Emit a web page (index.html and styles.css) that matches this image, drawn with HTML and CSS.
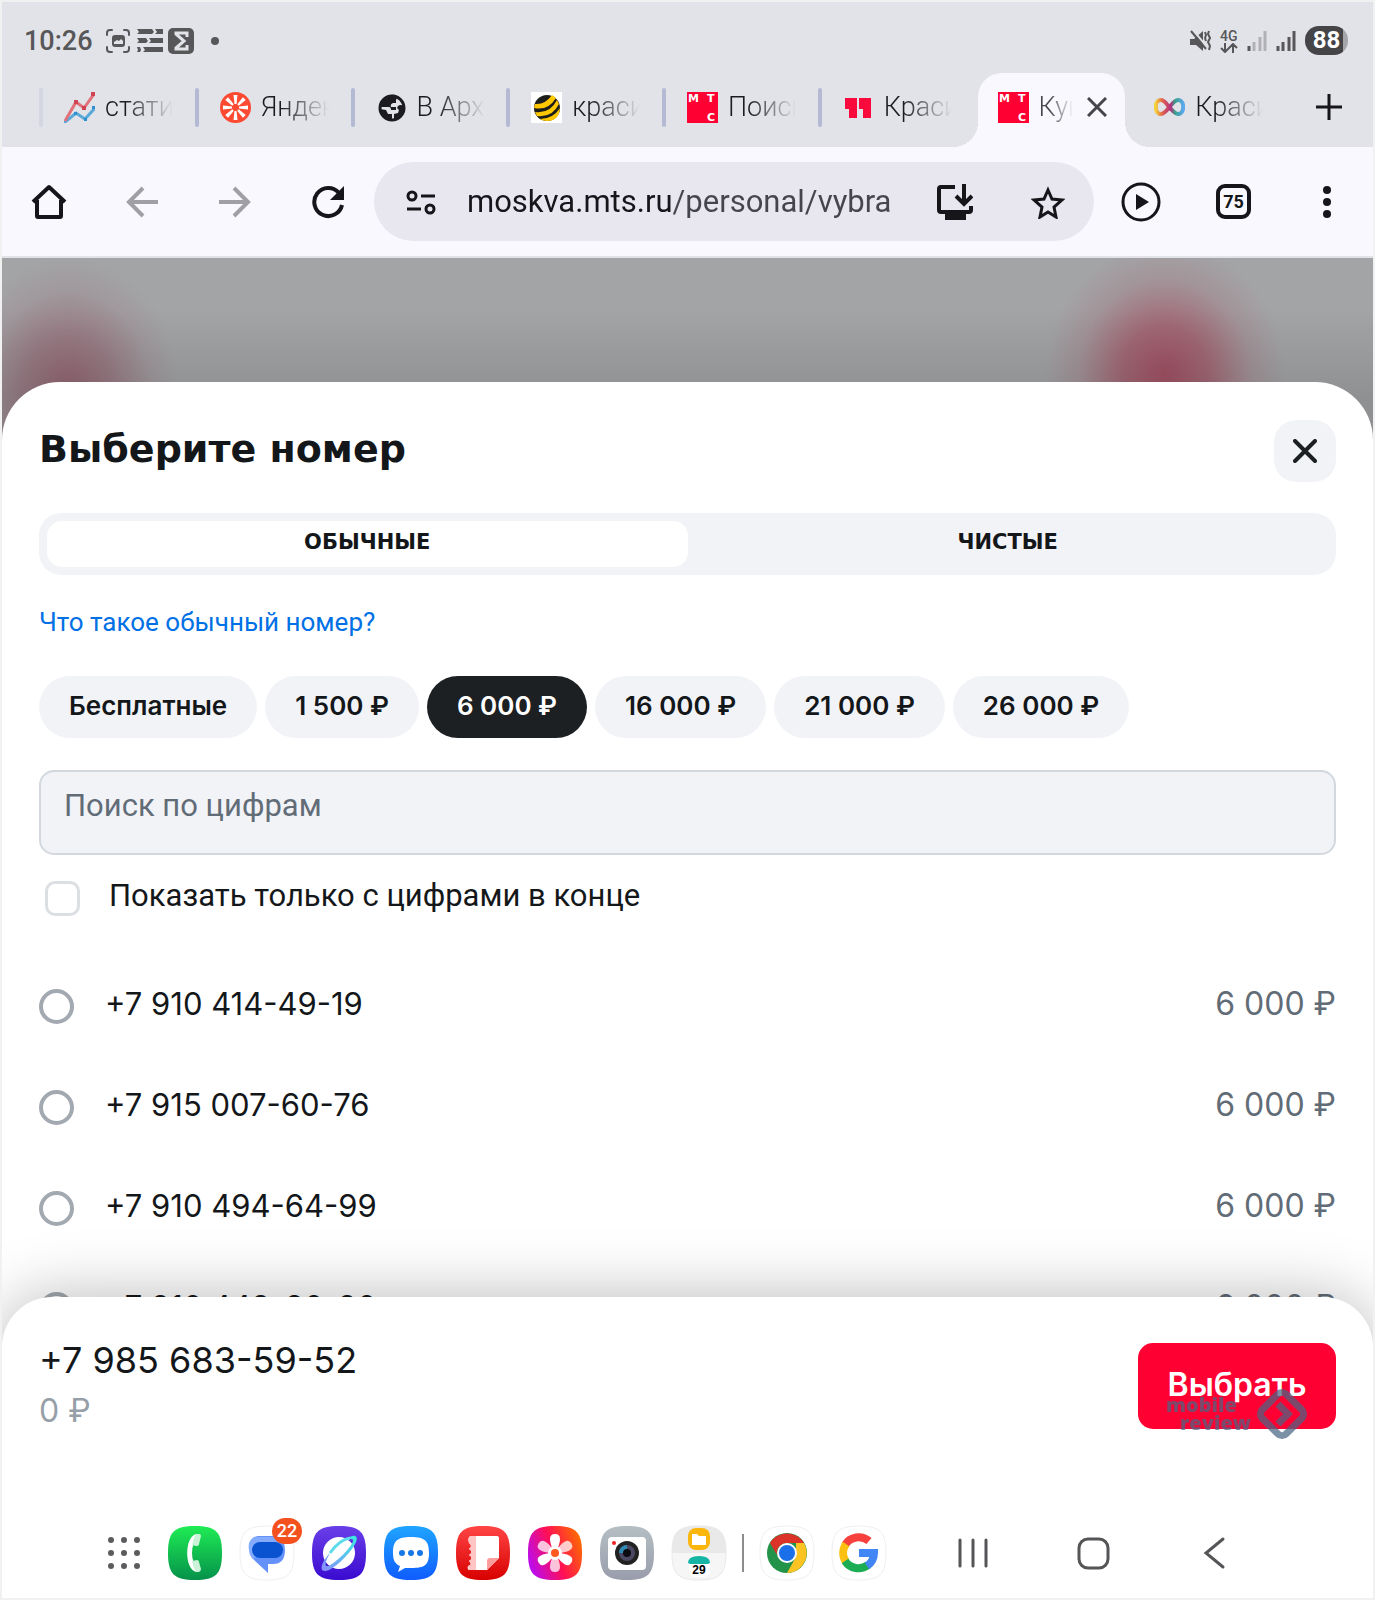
FILE: index.html
```html
<!DOCTYPE html>
<html lang="ru">
<head>
  <meta charset="utf-8">
  <meta name="viewport" content="width=device-width, initial-scale=1">
  <title>Выберите номер</title>
  <link rel="stylesheet" href="styles.css">
</head>
<body>
  <!-- shared shapes -->
  <svg class="defs" width="0" height="0" aria-hidden="true">
    <defs>
      <path id="squircle" d="M27 0C6 0 0 6 0 27S6 54 27 54 54 48 54 27 48 0 27 0Z"/>
      <linearGradient id="g-green" x2="0" y2="1"><stop stop-color="#1fec54"/><stop offset="1" stop-color="#05914a"/></linearGradient>
      <linearGradient id="g-violet" x2="0" y2="1"><stop stop-color="#6a3fe8"/><stop offset="1" stop-color="#3a0bd0"/></linearGradient>
      <linearGradient id="g-blue" x2="0" y2="1"><stop stop-color="#1fa5ff"/><stop offset="1" stop-color="#0f5cff"/></linearGradient>
      <linearGradient id="g-red" x2="0" y2="1"><stop stop-color="#ff4545"/><stop offset="1" stop-color="#d80000"/></linearGradient>
      <linearGradient id="g-grey" x2="0" y2="1"><stop stop-color="#b5bfc4"/><stop offset="1" stop-color="#9a9dac"/></linearGradient>
      <linearGradient id="g-flower" y1="0.7" x2="1" y2="0.3"><stop stop-color="#b80cf5"/><stop offset="0.5" stop-color="#ff0f55"/><stop offset="1" stop-color="#ff6a00"/></linearGradient>
      <linearGradient id="g-orbit" x1="1" y1="0" x2="0" y2="1"><stop stop-color="#35eede"/><stop offset="1" stop-color="#8c8cff"/></linearGradient>
      <linearGradient id="g-loop"><stop stop-color="#f5d13c"/><stop offset="0.25" stop-color="#e0614e"/><stop offset="0.55" stop-color="#b5307f"/><stop offset="0.7" stop-color="#37a088"/><stop offset="1" stop-color="#5ba8ee"/></linearGradient>
      <symbol id="mts" viewBox="0 0 31 31">
        <rect width="31" height="31" fill="#ff0032"/>
        <g class="mts-letters"><text x="1" y="10">М</text><text x="20" y="10">Т</text><text x="20" y="29">С</text></g>
      </symbol>
    </defs>
  </svg>

  <div class="status-bar">
    <div class="status-left">
      <span class="time">10:26</span>
      <svg width="90" height="28" viewBox="0 0 90 28">
        <g fill="none" stroke="#57575a" stroke-width="2" stroke-linecap="round">
          <path d="M2 8V6q0-3 3-3h2M19 3h2q3 0 3 3v2M24 20v2q0 3-3 3h-2M7 25H5q-3 0-3-3v-2"/>
        </g>
        <rect x="7" y="8" width="13" height="12" rx="3" fill="#57575a"/>
        <path d="M9 17v-2l3-2 2 1 2-2 2 2v3z" fill="#e2e3e8"/>
        <g fill="#57575a">
          <path d="M32 2h15l2 3-2 2H32l2-2zM50 2h8v5h-8l2-2zM32 11h9l2 3-2 2h-9l2-2zM44 11h14v5H44l2-2zM32 20h3l1 3-1 2h-3l1-2zM38 20h20v5H38l2-2z"/>
          <rect x="63" y="1" width="26" height="26" rx="5"/>
        </g>
        <path d="M82 10V6H71v1l8 7-8 7v1h11v-4" fill="none" stroke="#e2e3e8" stroke-width="3"/>
      </svg>
      <span class="status-dot"></span>
    </div>
    <div class="status-right">
      <svg width="22" height="22" viewBox="0 0 22 22">
        <path d="M1 9h4l9-8v20l-7-6H1z" fill="#57575a"/>
        <path d="M4 0l14 17" stroke="#e2e3e8" stroke-width="2"/>
        <path d="M2 1l15 18" stroke="#57575a" stroke-width="2"/>
        <path d="M16 2l1 3-1 3 1 3M20 1l-1 3 2 4-2 4 2 4-1 4" fill="none" stroke="#57575a" stroke-width="2"/>
      </svg>
      <span class="network">4G
        <svg width="18" height="10" viewBox="0 0 18 10"><path d="M5 0v9M1 5l4 4 4-4M13 10V1M9 5l4-4 4 4" fill="none" stroke="#57575a" stroke-width="2"/></svg>
      </span>
      <svg width="20" height="20" viewBox="0 0 20 20" stroke-width="3"><path d="M2 15v5" stroke="#57575a"/><path d="M7 11v9M13 6v14M18 0v20" stroke="#b0b0b5"/></svg>
      <svg width="20" height="20" viewBox="0 0 20 20" stroke-width="3" stroke="#57575a"><path d="M2 15v5M7 11v9M13 6v14M18 0v20"/></svg>
      <span class="battery">88</span>
    </div>
  </div>

  <nav class="tabs">
    <a class="tab first" href="#">
      <svg class="tab-icon" viewBox="0 0 31 31" fill="none" stroke-width="3">
        <path d="M0 31l12-10 9 6 10-11" stroke="#58a9d8"/><path d="M1 29l11-19 8 6L30 2" stroke="#e0707a"/>
        <path d="M10 8h4v4h-4zM18 14h4v4h-4zM27 0h4v4h-4z" fill="#cf4452"/><path d="M10 20h3v3h-3zM20 26h3v3h-3zM28 14h3v3h-3z" fill="#2f8fd0"/>
      </svg>
      <span class="tab-title">статис</span>
    </a>
    <a class="tab" href="#">
      <svg class="tab-icon" viewBox="0 0 31 31"><circle cx="15.5" cy="15.5" r="15.5" fill="#fc4a32"/>
        <g fill="#fff"><path id="ray" d="M13.500 3h4l-1 9h-2z"/><use href="#ray" transform="rotate(45 15.500 15.500)"/><use href="#ray" transform="rotate(90 15.500 15.500)"/><use href="#ray" transform="rotate(135 15.500 15.500)"/><use href="#ray" transform="rotate(180 15.500 15.500)"/><use href="#ray" transform="rotate(225 15.500 15.500)"/><use href="#ray" transform="rotate(270 15.500 15.500)"/><use href="#ray" transform="rotate(315 15.500 15.500)"/></g>
      </svg>
      <span class="tab-title">Яндекс</span>
    </a>
    <a class="tab" href="#">
      <svg class="tab-icon" viewBox="0 0 31 31"><circle cx="16" cy="16" r="12" fill="#e2e3e8" stroke="#1b1b20" stroke-width="3"/><path d="M19 3C10 2 4 7 4 15h9q2 0 2 3h5v-3h-5q-1-3 2-4h3V8q0-2 3-3zM28 14q-4-2-6 0t1 4l-1 3-4 1v6q10-2 10-14zM4 17q1 11 12 11v-6h-4l-2-4z" fill="#1b1b20"/></svg>
      <span class="tab-title">В Архи</span>
    </a>
    <a class="tab" href="#">
      <svg class="tab-icon" viewBox="0 0 31 31"><rect width="31" height="31" fill="#fff"/><circle cx="16" cy="16" r="13" fill="#1d1d1b"/>
        <path d="M4 12q10 1 17-9l4 3q-8 13-22 10zM4 20q15 2 22-12l2 4q-7 14-22 12zM9 27q13 0 20-11-1 13-13 13-4 0-7-2z" fill="#ffc800"/></svg>
      <span class="tab-title">красив</span>
    </a>
    <a class="tab" href="#">
      <svg class="tab-icon"><use href="#mts"/></svg>
      <span class="tab-title">Поиск</span>
    </a>
    <a class="tab" href="#">
      <svg class="tab-icon" viewBox="0 0 31 31"><path d="M2 6h12v20H6V17H2zM16 6h12v20h-8V17h-4z" fill="#fa0a3c"/></svg>
      <span class="tab-title">Красив</span>
    </a>
    <a class="tab active" href="#">
      <svg class="tab-icon"><use href="#mts"/></svg>
      <span class="tab-title">Купить</span>
      <svg class="tab-close" width="20" height="20" viewBox="0 0 20 20"><path d="M1 1l18 18M19 1L1 19" stroke="#45454b" stroke-width="3"/></svg>
    </a>
    <a class="tab last" href="#">
      <svg class="tab-icon" viewBox="0 0 31 31"><path d="M15 15C11 9 9 8 7 8c-7 0-7 14 0 14 6 0 11-14 17-14 7 0 7 14 0 14-3 0-5-3-9-7z" fill="none" stroke="url(#g-loop)" stroke-width="4"/></svg>
      <span class="tab-title">Красив</span>
    </a>
    <button class="new-tab" aria-label="Новая вкладка">
      <svg width="26" height="26" viewBox="0 0 26 26"><path d="M13 0v26M0 13h26" stroke="#15151a" stroke-width="3"/></svg>
    </button>
  </nav>

  <div class="toolbar">
    <button class="tool" aria-label="Домой"><svg width="36" height="36" viewBox="0 0 36 36" fill="none" stroke="#15151a" stroke-width="4" stroke-linejoin="round"><path d="M2 18L18 3l16 15M6 16v16q0 1 1 1h22q1 0 1-1V16"/></svg></button>
    <button class="tool" aria-label="Назад"><svg width="32" height="32" viewBox="0 0 32 32" fill="none" stroke="#a09fa5" stroke-width="4"><path d="M32 16H3M17 2L3 16l14 14"/></svg></button>
    <button class="tool" aria-label="Вперёд"><svg width="32" height="32" viewBox="0 0 32 32" fill="none" stroke="#a09fa5" stroke-width="4"><path d="M0 16h29M15 2l14 14-14 14"/></svg></button>
    <button class="tool" aria-label="Обновить"><svg width="34" height="34" viewBox="0 0 34 34"><path d="M28 8A14 14 0 1 0 31 20" fill="none" stroke="#15151a" stroke-width="4"/><path d="M33 1v14H19z" fill="#15151a"/></svg></button>
    <div class="address">
      <button class="tool" aria-label="Сведения о сайте"><svg width="30" height="26" viewBox="0 0 30 26" fill="none" stroke="#15151a" stroke-width="3"><circle cx="6" cy="7" r="4"/><circle cx="24" cy="20" r="4"/><path d="M15 7h14M1 20h14"/></svg></button>
      <input class="url" type="text" aria-label="Адрес" value="moskva.mts.ru/personal/vybra">
      <button class="tool" aria-label="Установить"><svg width="36" height="36" viewBox="0 0 36 36" fill="none" stroke="#15151a" stroke-width="4"><path d="M18 3H4q-2 0-2 2v21q0 2 2 2h28q2 0 2-2v-4M27 0v19M19 12l8 8 8-8"/><path d="M8 28h21v8H8z" fill="#15151a" stroke="none"/></svg></button>
      <button class="tool" aria-label="В закладки"><svg width="34" height="34" viewBox="0 0 34 34" fill="none" stroke="#15151a" stroke-width="3"><path d="M17 5l4 9 10 1-8 7 2 10-8-5-8 5 2-10-8-7 10-1z"/></svg></button>
    </div>
    <button class="tool" aria-label="Воспроизвести"><svg width="40" height="40" viewBox="0 0 40 40"><circle cx="20" cy="20" r="18" fill="none" stroke="#15151a" stroke-width="3"/><path d="M15 12l13 8-13 8z" fill="#15151a"/></svg></button>
    <button class="tool" aria-label="Вкладки"><span class="tab-count">75</span></button>
    <button class="tool" aria-label="Меню"><svg width="8" height="32" viewBox="0 0 8 32" fill="#15151a"><circle cx="4" cy="4" r="4"/><circle cx="4" cy="16" r="4"/><circle cx="4" cy="28" r="4"/></svg></button>
  </div>

  <div class="page">
    <main class="sheet">
      <div class="sheet-header">
        <h1>Выберите номер</h1>
        <button class="close" aria-label="Закрыть"><svg width="24" height="24" viewBox="0 0 24 24"><path d="M2 2l20 20M22 2L2 22" stroke="#1d2023" stroke-width="4" stroke-linecap="round"/></svg></button>
      </div>

      <div class="segmented">
        <button class="segment selected">ОБЫЧНЫЕ</button>
        <button class="segment">ЧИСТЫЕ</button>
      </div>

      <a class="hint" href="#">Что такое обычный номер?</a>

      <div class="chips">
        <button class="chip">Бесплатные</button>
        <button class="chip">1 500 ₽</button>
        <button class="chip selected">6 000 ₽</button>
        <button class="chip">16 000 ₽</button>
        <button class="chip">21 000 ₽</button>
        <button class="chip">26 000 ₽</button>
      </div>

      <input class="search" type="text" placeholder="Поиск по цифрам" aria-label="Поиск по цифрам">

      <div class="only-end">
        <input type="checkbox" id="only-end">
        <label for="only-end">Показать только с цифрами в конце</label>
      </div>

      <div class="numbers">
        <div class="number">
          <input type="radio" name="number" id="n1">
          <label for="n1"><span>+7 910 414-49-19</span><span class="price">6 000 ₽</span></label>
        </div>
        <div class="number">
          <input type="radio" name="number" id="n2">
          <label for="n2"><span>+7 915 007-60-76</span><span class="price">6 000 ₽</span></label>
        </div>
        <div class="number">
          <input type="radio" name="number" id="n3">
          <label for="n3"><span>+7 910 494-64-99</span><span class="price">6 000 ₽</span></label>
        </div>
        <div class="number">
          <input type="radio" name="number" id="n4">
          <label for="n4"><span>+7 910 449-80-90</span><span class="price">6 000 ₽</span></label>
        </div>
      </div>
    </main>
  </div>

  <footer class="bottom">
    <div class="choice">
      <div>
        <div class="choice-number">+7 985 683-59-52</div>
        <div class="choice-price">0 ₽</div>
      </div>
      <div class="choice-action">
        <button class="submit">Выбрать</button>
        <div class="watermark">
          <div><div>mobile</div><div class="second">review</div></div>
          <svg width="54" height="54" viewBox="0 0 54 54" fill="none" stroke="#4b6684" stroke-width="7"><rect x="10" y="10" width="34" height="34" rx="6" transform="rotate(45 27 27)"/><path d="M23 17l10 10-10 10"/></svg>
        </div>
      </div>
    </div>

    <div class="dock">
      <div class="apps">
        <button class="app" aria-label="Все приложения"><svg viewBox="0 0 54 54" fill="#5c5c5f"><circle cx="15" cy="14" r="3"/><circle cx="28" cy="14" r="3"/><circle cx="41" cy="14" r="3"/><circle cx="15" cy="27" r="3"/><circle cx="28" cy="27" r="3"/><circle cx="41" cy="27" r="3"/><circle cx="15" cy="40" r="3"/><circle cx="28" cy="40" r="3"/><circle cx="41" cy="40" r="3"/></svg></button>
        <button class="app" aria-label="Телефон"><svg viewBox="0 0 54 54"><use href="#squircle" fill="url(#g-green)"/><path d="M29 8C16 9 16 45 29 46q2 0 2-3-7-5-7-16t7-16q0-3-2-3z" fill="#fff"/><path d="M28 8h3q2 0 2 2l-2 8q0 2-3 2l-4-1q1-6 4-11zM24 35l5-1q2 0 2 2l2 7q0 2-2 3h-3q-3-5-4-11z" fill="#c9f2d8"/></svg></button>
        <button class="app" aria-label="Сообщения"><svg viewBox="0 0 54 54"><use href="#squircle" fill="#fff" stroke="#efeff2"/><path d="M18 10h18q9 3 9 14 0 14-12 14h-5v9L12 32Q6 11 18 10z" fill="#6492fa"/><path d="M16 11q-9 2-7 13 0 5 4 9l20-14 9-3q-2-5-6-5z" fill="#85abff"/><rect x="12" y="16" width="31" height="16" rx="8" fill="#0952d0"/></svg><span class="badge">22</span></button>
        <button class="app" aria-label="Браузер"><svg viewBox="0 0 54 54"><use href="#squircle" fill="url(#g-violet)"/><circle cx="27" cy="27" r="16" fill="#fff"/><path d="M34 14C41 7 47 9 44 16 40 26 21 45 13 45c-7 0-2-11 5-18-5 9-6 14-2 13C23 38 42 19 41 14q-1-2-7 0z" fill="url(#g-orbit)"/><path d="M18 27Q27 14 38 12" fill="none" stroke="#5fdcec" stroke-width="3"/></svg></button>
        <button class="app" aria-label="Чаты"><svg viewBox="0 0 54 54"><use href="#squircle" fill="url(#g-blue)"/><path d="M27 11c14 0 18 4 18 16s-4 15-18 15h-6l-7 4 2-6c-5-2-7-6-7-13 0-12 4-16 18-16z" fill="#fff"/><g fill="#1777e8"><circle cx="18" cy="27" r="3"/><circle cx="27" cy="27" r="3"/><circle cx="36" cy="27" r="3"/></g></svg></button>
        <button class="app" aria-label="Заметки"><svg viewBox="0 0 54 54"><use href="#squircle" fill="url(#g-red)"/><path d="M15 10h26q2 0 2 2v20L31 44H13q-2-1-1-4 5-1 1-5 5-3 0-6 5-3 0-6 4-3 0-6-2-6 2-7z" fill="#fff"/><path d="M15 10h5v34h-7l-1-4q5-1 1-5 5-3 0-6 5-3 0-6 4-3 0-6-2-6 2-7z" fill="#ffc5c5"/><path d="M31 44V35q0-3 3-3h9z" fill="#ff9c9c"/></svg></button>
        <button class="app" aria-label="Галерея"><svg viewBox="0 0 54 54"><use href="#squircle" fill="url(#g-flower)"/><g fill="#fff"><path id="petal" d="M27 27Q22 19 22 13q0-5 5-5t5 5q0 6-5 14z"/><use href="#petal" transform="rotate(60 27 27)" opacity="0.75"/><use href="#petal" transform="rotate(120 27 27)"/><use href="#petal" transform="rotate(180 27 27)" opacity="0.75"/><use href="#petal" transform="rotate(240 27 27)"/><use href="#petal" transform="rotate(300 27 27)" opacity="0.75"/></g><circle cx="27" cy="27" r="7" fill="#fff"/><circle cx="27" cy="27" r="4" fill="#ff5a1f"/></svg></button>
        <button class="app" aria-label="Камера"><svg viewBox="0 0 54 54"><use href="#squircle" fill="url(#g-grey)"/><rect x="8" y="11" width="38" height="33" rx="4" fill="#fff"/><circle cx="14" cy="17" r="2" fill="#e22"/><circle cx="27" cy="27" r="12" fill="#222"/><circle cx="27" cy="27" r="8" fill="#4c4862"/><path d="M27 27v-8a8 8 0 0 0-8 8z" fill="#2d8bb5"/><circle cx="27" cy="27" r="4" fill="#0b0b12"/></svg></button>
        <button class="app" aria-label="Папка"><svg viewBox="0 0 54 54"><use href="#squircle" fill="#f6f6f7" stroke="#e9e9eb"/><path d="M0 27C0 6 6 0 27 0S54 6 54 27z" fill="#e9e9ea"/><rect x="16" y="2" width="22" height="22" rx="8" fill="#fbb60d"/><path d="M20 8h5l2 2h7v9H20z" fill="#fff"/><rect x="17" y="32" width="21" height="19" rx="6" fill="#fff"/><path d="M16 37q0-7 11-7t11 7l-2 1H18z" fill="#14b5a5"/><text class="cal-day" x="27" y="48">29</text></svg></button>
        <span class="dock-line"></span>
        <button class="app" aria-label="Chrome"><svg viewBox="0 0 54 54"><use href="#squircle" fill="#fff" stroke="#efeff2"/><circle cx="27" cy="27" r="20" fill="#23934a"/><path d="M10 17a20 20 0 0 1 34 0H27a10 10 0 0 0-10 12z" fill="#db3327"/><path d="M44 17A20 20 0 0 1 27 47l9-16V17z" fill="#fcc322"/><circle cx="27" cy="27" r="10" fill="#fff"/><circle cx="27" cy="27" r="8" fill="#1b6fe8"/></svg></button>
        <button class="app" aria-label="Google"><svg viewBox="0 0 54 54" fill="none" stroke-width="8"><use href="#squircle" fill="#fff" stroke="#efeff2" stroke-width="1"/><path d="M37 15A16 16 0 0 0 13 19" stroke="#f7413f"/><path d="M14 18A16 16 0 0 0 14 36" stroke="#fbc011"/><path d="M13 35A16 16 0 0 0 36 39" stroke="#1aad53"/><path d="M35 40A16 16 0 0 0 42 27H27" stroke="#4285f4"/></svg></button>
      </div>
      <div class="system-nav">
        <button class="app" aria-label="Недавние"><svg viewBox="0 0 54 54" stroke="#555558" stroke-width="3" stroke-linecap="round"><path d="M14 14v26M27 14v26M40 14v26"/></svg></button>
        <button class="app" aria-label="Главный экран"><svg viewBox="0 0 54 54"><rect x="12" y="13" width="29" height="29" rx="9" fill="none" stroke="#555558" stroke-width="3"/></svg></button>
        <button class="app" aria-label="Назад"><svg viewBox="0 0 54 54" fill="none" stroke="#555558" stroke-width="3" stroke-linecap="round"><path d="M35 13L18 27l17 14"/></svg></button>
      </div>
    </div>
  </footer>
</body>
</html>
```

FILE: styles.css
```css
* {
  box-sizing: border-box;
}

body {
  margin: 0;
  height: 100vh;
  display: flex;
  flex-direction: column;
  border: 2px solid #f1f1f2;
  background-color: white;
  font-family: Roboto, Arial, sans-serif;
  color: #14171a;
  overflow: hidden;
}

button {
  border: none;
  padding: 0;
  background: none;
  font-family: inherit;
  color: inherit;
  cursor: pointer;
}

svg {
  display: block;
  flex: none;
}

.defs {
  position: absolute;
}

/* Status bar */
.status-bar {
  display: flex;
  justify-content: space-between;
  align-items: center;
  height: 71px;
  padding: 6px 25px 0 22px;
  background-color: #e2e3e8;
  color: #57575a;
}

.status-left,
.status-right {
  display: flex;
  align-items: center;
}

.status-left {
  gap: 12px;
}

.status-right {
  gap: 9px;
}

.time {
  font-size: 27px;
  font-weight: 500;
}

.status-dot {
  width: 8px;
  height: 8px;
  margin-left: 4px;
  border-radius: 50%;
  background-color: #57575a;
}

.network {
  font-size: 14px;
  line-height: 14px;
  font-weight: 500;
}

.battery {
  width: 43px;
  border-radius: 14px;
  background: linear-gradient(to right, #454547 88%, #a5a5aa 88%);
  color: white;
  font-size: 24px;
  line-height: 29px;
  font-weight: 700;
  text-align: center;
}

/* Tab strip */
.tabs {
  display: grid;
  grid-template-columns: repeat(8, minmax(0, 1fr)) 88px;
  height: 74px;
  padding-left: 37px;
  background-color: #e2e3e8;
}

.tab {
  display: flex;
  align-items: center;
  position: relative;
  padding-bottom: 6px;
  color: #1b1b20;
  text-decoration: none;
}

.tab::before {
  content: "";
  width: 4px;
  height: 39px;
  margin-right: 21px;
  border-radius: 2px;
  background-color: #b4b9d4;
}

.tab.first::before {
  opacity: 0.3;
}

.tab.active::before,
.tab.last::before {
  background-color: transparent;
}

.tab-icon {
  width: 31px;
  height: 31px;
}

.mts-letters {
  fill: white;
  font: bold 11px "DejaVu Sans", sans-serif;
}

.tab-title {
  width: 68px;
  margin-left: 10px;
  overflow: hidden;
  font-size: 27px;
  font-weight: 300;
  white-space: nowrap;
  mask-image: linear-gradient(to right, black 30%, transparent);
}

.tab.active {
  margin: 0 4px;
  border-radius: 24px 24px 0 0;
  background-color: #f9f8fe;
}

.tab.active::before {
  margin-right: 16px;
}

/* outward curves at the foot of the active tab */
.tab.active::after {
  content: "";
  position: absolute;
  bottom: 0;
  left: -25px;
  right: -25px;
  height: 25px;
  background:
    radial-gradient(circle at 0 0, transparent 25px, #f9f8fe 25px) left / 25px 25px no-repeat,
    radial-gradient(circle at 100% 0, transparent 25px, #f9f8fe 25px) right / 25px 25px no-repeat;
}

.tab.active .tab-title {
  width: 34px;
  color: #45454b;
}

.tab-close {
  margin-left: 14px;
}

.new-tab {
  padding-bottom: 6px;
  display: flex;
  align-items: center;
  justify-content: center;
}

/* Toolbar */
.toolbar {
  display: flex;
  align-items: center;
  height: 111px;
  border-bottom: 2px solid #e2e3e8;
  background-color: #f9f8fe;
}

.tool {
  flex: none;
  width: 93px;
  height: 79px;
  display: flex;
  align-items: center;
  justify-content: center;
}

.address {
  flex: 1;
  min-width: 0;
  display: flex;
  align-items: center;
  border-radius: 40px;
  background-color: #e8e6ef;
}

.url {
  flex: 1;
  min-width: 0;
  height: 60px;
  padding: 0;
  border: none;
  font-family: Roboto, Arial, sans-serif;
  font-size: 31px;
  /* the path is dimmer than the host */
  color: transparent;
  background: linear-gradient(to right, #15151a 205px, #45454f 205px);
  background-clip: text;
}

.tab-count {
  width: 35px;
  height: 35px;
  border: 4px solid #15151a;
  border-radius: 9px;
  font-size: 18px;
  line-height: 27px;
  font-weight: 700;
  text-align: center;
}

/* Page behind the sheet */
.page {
  flex: 1;
  min-height: 0;
  display: flex;
  padding-top: 124px;
  background:
    linear-gradient(to bottom, transparent 50px, rgba(0, 0, 0, 0.12) 140px) top / 100% 200px no-repeat,
    radial-gradient(ellipse 120px 130px at 1163px 115px, rgba(160, 60, 82, 0.8), rgba(160, 60, 82, 0.58) 35%, rgba(160, 60, 82, 0.15) 72%, transparent),
    radial-gradient(ellipse 110px 130px at 66px 130px, rgba(140, 75, 92, 0.7), rgba(140, 75, 92, 0.45) 40%, rgba(140, 75, 92, 0.12) 75%, transparent),
    #a3a4a6;
}

.sheet {
  flex: 1;
  min-width: 0;
  padding: 38px 37px 0;
  border-radius: 58px 58px 0 0;
  background-color: white;
}

.sheet-header {
  display: flex;
  justify-content: space-between;
  align-items: center;
}

h1 {
  margin: 0;
  padding-bottom: 4px;
  font-family: "DejaVu Sans", sans-serif;
  font-size: 38px;
  line-height: 58px;
}

.close {
  display: flex;
  align-items: center;
  justify-content: center;
  width: 62px;
  height: 62px;
  border-radius: 22px;
  background-color: #f2f3f7;
}

.segmented {
  display: flex;
  margin-top: 31px;
  padding: 8px;
  border-radius: 22px;
  background-color: #f2f3f7;
}

.segment {
  flex: 1;
  height: 46px;
  padding-bottom: 4px;
  border-radius: 15px;
  font-family: "DejaVu Sans", sans-serif;
  font-size: 21px;
  font-weight: bold;
}

.segment.selected {
  background-color: white;
}

.hint {
  display: block;
  margin-top: 31px;
  font-size: 26px;
  line-height: 32px;
  color: #0070e5;
  text-decoration: none;
}

.chips {
  display: flex;
  gap: 8px;
  margin-top: 38px;
}

.chip {
  height: 62px;
  padding: 0 30px 4px;
  border-radius: 31px;
  background-color: #f2f3f7;
  font-family: Inter, Arial, sans-serif;
  font-size: 26px;
  font-weight: 600;
  white-space: nowrap;
}

.chip.selected {
  background-color: #1d2023;
  color: white;
}

.search {
  display: block;
  width: 100%;
  height: 85px;
  margin-top: 32px;
  padding: 0 23px 14px;
  border: 2px solid #d3d8df;
  border-radius: 15px;
  background-color: #f2f3f7;
  font-family: inherit;
  font-size: 31px;
}

.search::placeholder {
  color: #626c77;
  opacity: 1;
}

input[type="checkbox"],
input[type="radio"] {
  appearance: none;
  flex: none;
  width: 35px;
  height: 35px;
  margin: 0;
  border: 3px solid #dbdfe3;
  border-radius: 10px;
  background-color: white;
}

input[type="radio"] {
  border: 4px solid #a3a9b1;
  border-radius: 50%;
}

.only-end {
  display: flex;
  align-items: center;
  gap: 29px;
  height: 35px;
  margin-top: 26px;
  padding-left: 6px;
  font-size: 31px;
}

.only-end label,
.number label {
  padding-bottom: 6px;
}

.numbers {
  margin-top: 40px;
}

.number {
  display: flex;
  align-items: center;
  gap: 31px;
  height: 101px;
  font-family: Inter, Arial, sans-serif;
  font-size: 31px;
}

.number label {
  flex: 1;
  display: flex;
  align-items: baseline;
  justify-content: space-between;
}

.price {
  font-size: 32px;
  color: #626c77;
}

/* Bottom panel */
.bottom {
  position: relative;
  margin-top: -58px;
  border-radius: 50px 50px 0 0;
  background-color: white;
  box-shadow: 0 0 64px rgba(0, 0, 0, 0.28);
}

.choice {
  display: flex;
  justify-content: space-between;
  align-items: flex-start;
  padding: 46px 37px 65px;
  font-family: Inter, Arial, sans-serif;
}

.choice-number {
  font-size: 36px;
  line-height: 34px;
}

.choice-price {
  margin-top: 14px;
  font-size: 32px;
  line-height: 40px;
  color: #969fa8;
}

.choice-action {
  position: relative;
}

.submit {
  width: 198px;
  height: 86px;
  padding-bottom: 4px;
  border-radius: 15px;
  background-color: #ff0032;
  color: white;
  font-size: 32px;
  font-weight: 600;
}

.watermark {
  position: absolute;
  right: 27px;
  bottom: -12px;
  display: flex;
  align-items: center;
  gap: 4px;
  opacity: 0.72;
  color: #4b6684;
  font-family: "Open Sans", sans-serif;
  font-size: 20px;
  line-height: 18px;
  font-weight: 800;
  pointer-events: none;
}

.watermark .second {
  padding-left: 14px;
}

.dock {
  display: flex;
  justify-content: space-between;
  padding: 30px 131px 18px 94px;
}

.apps {
  display: flex;
  align-items: center;
  gap: 18px;
}

.app {
  position: relative;
  width: 54px;
  height: 54px;
}

.app svg {
  width: 54px;
  height: 54px;
  overflow: visible;
}

.badge {
  position: absolute;
  top: -8px;
  right: -8px;
  width: 30px;
  border-radius: 13px;
  background-color: #f4511e;
  color: white;
  font-size: 18px;
  line-height: 26px;
  font-weight: 500;
}

.cal-day {
  font: bold 12px Arial, sans-serif;
  text-anchor: middle;
}

.dock-line {
  width: 2px;
  height: 38px;
  margin: 0 -2px;
  background-color: #8d8d90;
}

.system-nav {
  display: flex;
  gap: 67px;
}
```
